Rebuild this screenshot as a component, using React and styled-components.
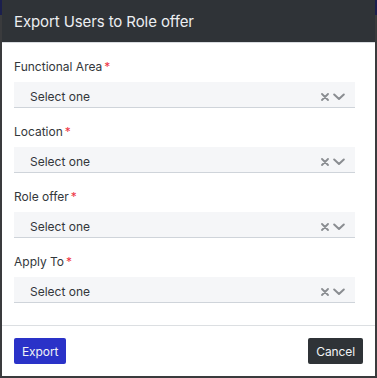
import React from 'react'
import styled, { createGlobalStyle } from 'styled-components'

const Global = createGlobalStyle`
  html, body {
    margin: 0;
    padding: 0;
  }
  body {
    background: linear-gradient(#1b1f4d 0, #1b1f4d 15px, #3a3b3d 15px);
    font-family: Inter, "Liberation Sans", sans-serif;
    width: 377px;
    height: 378px;
    overflow: hidden;
  }
`

const Modal = styled.div`
  margin: 0 2px;
  width: 373px;
  height: 376px;
  background: #fff;
  display: flex;
  flex-direction: column;
`

const Header = styled.div`
  height: 42px;
  background: #2f3337;
  border-bottom: 1px solid #d9dce0;
  display: flex;
  align-items: center;
  padding: 0 12px;
  h2 {
    margin: 0;
    font-size: 15px;
    font-weight: 400;
    color: #eceef1;
    letter-spacing: -0.1px;
  }
`

const Body = styled.div`
  flex: 1;
  padding: 16px 20px 0 12px;
  display: flex;
  flex-direction: column;
  gap: 16px;
`

const Field = styled.div`
  display: flex;
  flex-direction: column;
  gap: 7px;
`

const Label = styled.label`
  display: block;
  height: 16px;
  font-size: 12px;
  line-height: 16px;
  color: #33373b;
  span {
    color: #ee3344;
    margin-left: 2px;
  }
`

const Select = styled.div`
  height: 23px;
  background: #f5f6f8;
  border-bottom: 1px solid #cfd4da;
  display: flex;
  align-items: flex-end;
  padding: 0 10px 2px 16px;
  font-size: 12px;
  color: #33373b;
  line-height: 16px;
`

const Value = styled.div`
  flex: 1;
`

const Icons = styled.div`
  display: flex;
  align-items: center;
  gap: 4px;
  color: #8a8d91;
  padding-bottom: 4px;
`

const Footer = styled.div`
  height: 50px;
  border-top: 1px solid #dcdfe2;
  display: flex;
  align-items: center;
  justify-content: space-between;
  padding: 0 12px;
`

const Button = styled.button`
  height: 26px;
  border: none;
  border-radius: 2px;
  padding: 0 8px;
  font-family: Inter, "Liberation Sans", sans-serif;
  font-size: 12px;
  letter-spacing: -0.1px;
  color: #f2f3f6;
  background: ${p => (p.$primary ? '#2a32c8' : '#2f3337')};
`

const ClearIcon = () => (
  <svg width="8" height="8" viewBox="0 0 8 8">
    <path d="M1 1L7 7M7 1L1 7" stroke="currentColor" strokeWidth="1.8" strokeLinecap="round" />
  </svg>
)

const ChevronIcon = () => (
  <svg width="12" height="8" viewBox="0 0 12 8">
    <path d="M1.2 1.5L6 6L10.8 1.5" fill="none" stroke="currentColor" strokeWidth="2" strokeLinecap="round" strokeLinejoin="round" />
  </svg>
)

const fields = ['Functional Area', 'Location', 'Role offer', 'Apply To']

export default function App() {
  return (
    <>
      <Global />
      <Modal>
        <Header>
          <h2>Export Users to Role offer</h2>
        </Header>
        <Body>
          {fields.map(f => (
            <Field key={f}>
              <Label>
                {f}
                <span>*</span>
              </Label>
              <Select>
                <Value>Select one</Value>
                <Icons>
                  <ClearIcon />
                  <ChevronIcon />
                </Icons>
              </Select>
            </Field>
          ))}
        </Body>
        <Footer>
          <Button $primary>Export</Button>
          <Button>Cancel</Button>
        </Footer>
      </Modal>
    </>
  )
}
